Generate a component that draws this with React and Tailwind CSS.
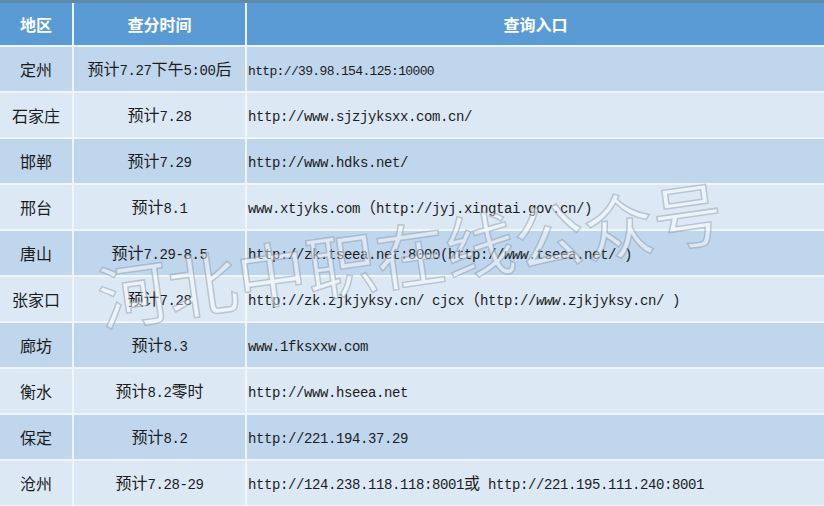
import React from 'react';

const rows = [
  { area: '定州', time: '预计7.27下午5:00后', url: ['http://39.98.154.125:10000'], small: true },
  { area: '石家庄', time: '预计7.28', url: ['http://www.sjzjyksxx.com.cn/'] },
  { area: '邯郸', time: '预计7.29', url: ['http://www.hdks.net/'] },
  { area: '邢台', time: '预计8.1', url: ['www.xtjyks.com（http://jyj.xingtai.gov.cn/)'] },
  { area: '唐山', time: '预计7.29-8.5', url: ['http://zk.tseea.net:8000(http://', { i: 'www' }, '.tseea.net/ )'] },
  { area: '张家口', time: '预计7.28', url: ['http://zk.zjkjyksy.cn/ cjcx（http://', { i: 'www' }, '.zjkjyksy.cn/ )'] },
  { area: '廊坊', time: '预计8.3', url: ['www.1fksxxw.com'] },
  { area: '衡水', time: '预计8.2零时', url: ['http://www.hseea.net'] },
  { area: '保定', time: '预计8.2', url: ['http://221.194.37.29'] },
  { area: '沧州', time: '预计7.28-29', url: ['http://124.238.118.118:8001或 http://221.195.111.240:8001'] },
];

// ASCII in a half-width mono, CJK in full-width sans (like SimSun in the source)
function Mixed({ text, small }) {
  const runs = text.match(/[\u0000-\u00ff]+|[^\u0000-\u00ff]+/g) || [];
  return runs.map((r, k) =>
    /^[\u0000-\u00ff]/.test(r) ? (
      <span
        key={k}
        className={
          small
            ? "font-['Liberation_Mono',monospace] text-[13px] tracking-[-0.65px] whitespace-pre"
            : "font-['Liberation_Mono',monospace] text-[14px] tracking-[-0.4px] whitespace-pre"
        }
      >
        {r}
      </span>
    ) : (
      <span key={k} className="font-['Noto_Sans_CJK_SC',sans-serif] text-[16px]">
        {r}
      </span>
    )
  );
}

function Url({ parts, small }) {
  return parts.map((p, k) =>
    typeof p === 'string' ? (
      <Mixed key={k} text={p} small={small} />
    ) : (
      <span key={k} className="font-['Liberation_Mono',monospace] text-[14px] tracking-[-0.4px] italic">
        {p.i}
      </span>
    )
  );
}

export default function App() {
  return (
    <div className="relative w-[824px] h-[506px] overflow-hidden bg-[#eef5fb] border-t-[3px] border-[#5f89aa] text-[#1c1c1c]">
      <div className="grid grid-cols-[72px_171px_1fr] gap-[2px] grid-rows-[42px_repeat(10,44px)]">
        <div className="bg-[#5b9bd5] flex items-center justify-center text-white font-bold text-[16px] font-['Noto_Sans_CJK_SC',sans-serif]">
          地区
        </div>
        <div className="bg-[#5b9bd5] flex items-center justify-center text-white font-bold text-[16px] font-['Noto_Sans_CJK_SC',sans-serif]">
          查分时间
        </div>
        <div className="bg-[#5b9bd5] flex items-center justify-center text-white font-bold text-[16px] font-['Noto_Sans_CJK_SC',sans-serif]">
          查询入口
        </div>
        {rows.map((r, idx) => {
          const bg = idx % 2 === 0 ? 'bg-[#bfd6ed]' : 'bg-[#dce9f5]';
          return (
            <React.Fragment key={r.area}>
              <div className={`${bg} flex items-center justify-center`}>
                <span>
                  <Mixed text={r.area} />
                </span>
              </div>
              <div className={`${bg} flex items-center justify-center`}>
                <span>
                  <Mixed text={r.time} />
                </span>
              </div>
              <div className={`${bg} flex items-center pl-[1px]`}>
                <span className="whitespace-nowrap">
                  <Url parts={r.url} small={r.small} />
                </span>
              </div>
            </React.Fragment>
          );
        })}
      </div>

      {/* watermark */}
      <div className="pointer-events-none absolute left-[98px] top-[258px] rotate-[-8deg] origin-left whitespace-nowrap font-['Noto_Sans_CJK_SC',sans-serif] text-[70px] leading-none text-white/45 [-webkit-text-stroke:1.5px_rgba(120,135,150,0.4)]">
        河北中职在线公众号
      </div>
    </div>
  );
}
